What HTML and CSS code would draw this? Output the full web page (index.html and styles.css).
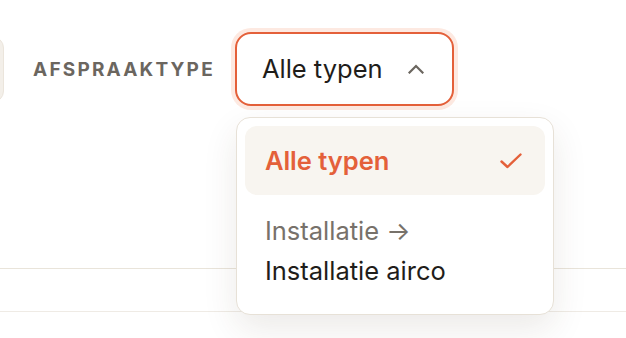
FILE: index.html
```html
<!DOCTYPE html>
<html lang="nl">
<head>
<meta charset="utf-8">
<link rel="stylesheet" href="styles.css">
</head>
<body>
<div class="toolbar">
  <div class="prev-control"></div>
  <span class="label">AFSPRAAKTYPE</span>
  <div class="select-wrap">
    <button class="select" type="button">
      <span class="select-text">Alle typen</span>
      <svg class="chevron" width="16" height="10" viewBox="0 0 16 10" fill="none"><path d="M1.5 8.5 L8 2 L14.5 8.5" stroke="#6b665f" stroke-width="2.2" stroke-linecap="square"/></svg>
    </button>
    <div class="menu">
      <div class="option selected">
        <span>Alle typen</span>
        <svg width="22" height="16" viewBox="0 0 22 16" fill="none"><path d="M1.5 8.5 L7.5 14 L20.5 1.5" stroke="#e4603a" stroke-width="2.4" stroke-linecap="round" stroke-linejoin="round"/></svg>
      </div>
      <div class="group">
        <div class="group-title">Installatie →</div>
        <div class="option">Installatie airco</div>
      </div>
    </div>
  </div>
</div>
<div class="rows">
  <div class="row"></div>
  <div class="row light"></div>
</div>
</body>
</html>
```
FILE: styles.css
```css
* { box-sizing: border-box; }
html, body { margin: 0; padding: 0; background: #ffffff; }
body {
  font-family: Inter, "Noto Sans", sans-serif;
  color: #1f1d1a;
  width: 626px;
  height: 338px;
  overflow: hidden;
}
.toolbar {
  display: flex;
  align-items: center;
  margin-top: 32px;
  margin-left: -196px;
}
.prev-control {
  width: 200px;
  height: 67px;
  background: #f3efe9;
  border: 1px solid #ebe5dc;
  border-radius: 12px;
  flex: none;
}
.label {
  margin-left: 29px;
  font-size: 19px;
  font-weight: 700;
  letter-spacing: 2.2px;
  color: #6b665f;
}
.select-wrap {
  position: relative;
  margin-left: 20px;
}
.select {
  display: flex;
  align-items: center;
  width: 219px;
  height: 74px;
  padding: 0 28px 0 25px;
  background: #ffffff;
  border: 2px solid #e4603a;
  border-radius: 16px;
  box-shadow: 0 0 0 4px #fde9e1;
  font-family: inherit;
  font-size: 25.5px;
  color: #1f1d1a;
  line-height: 40px;
}
.select-text { flex: 1; text-align: left; }
.chevron { flex: none; }
.menu {
  position: absolute;
  top: 85px;
  left: 1px;
  width: 318px;
  height: 198px;
  padding: 8px;
  background: #ffffff;
  border: 1px solid #e7e1d7;
  border-radius: 14px;
  box-shadow: 0 14px 34px rgba(70, 50, 30, 0.10);
  z-index: 2;
}
.option {
  font-size: 25.5px;
  line-height: 40px;
  padding: 0 20px;
}
.option.selected {
  display: flex;
  align-items: center;
  justify-content: space-between;
  height: 69px;
  padding: 0 23px 0 20px;
  background: #f8f5f0;
  border-radius: 12px;
  color: #e4603a;
  font-weight: 600;
}
.group { padding: 16px 0 15px; }
.group-title {
  font-size: 25.5px;
  line-height: 40px;
  padding: 0 20px;
  color: #77716a;
}
.rows { margin-top: 162px; }
.row {
  height: 43px;
  border-top: 1px solid #e9e4da;
}
.row.light { border-top-color: #efebe5; }
```
